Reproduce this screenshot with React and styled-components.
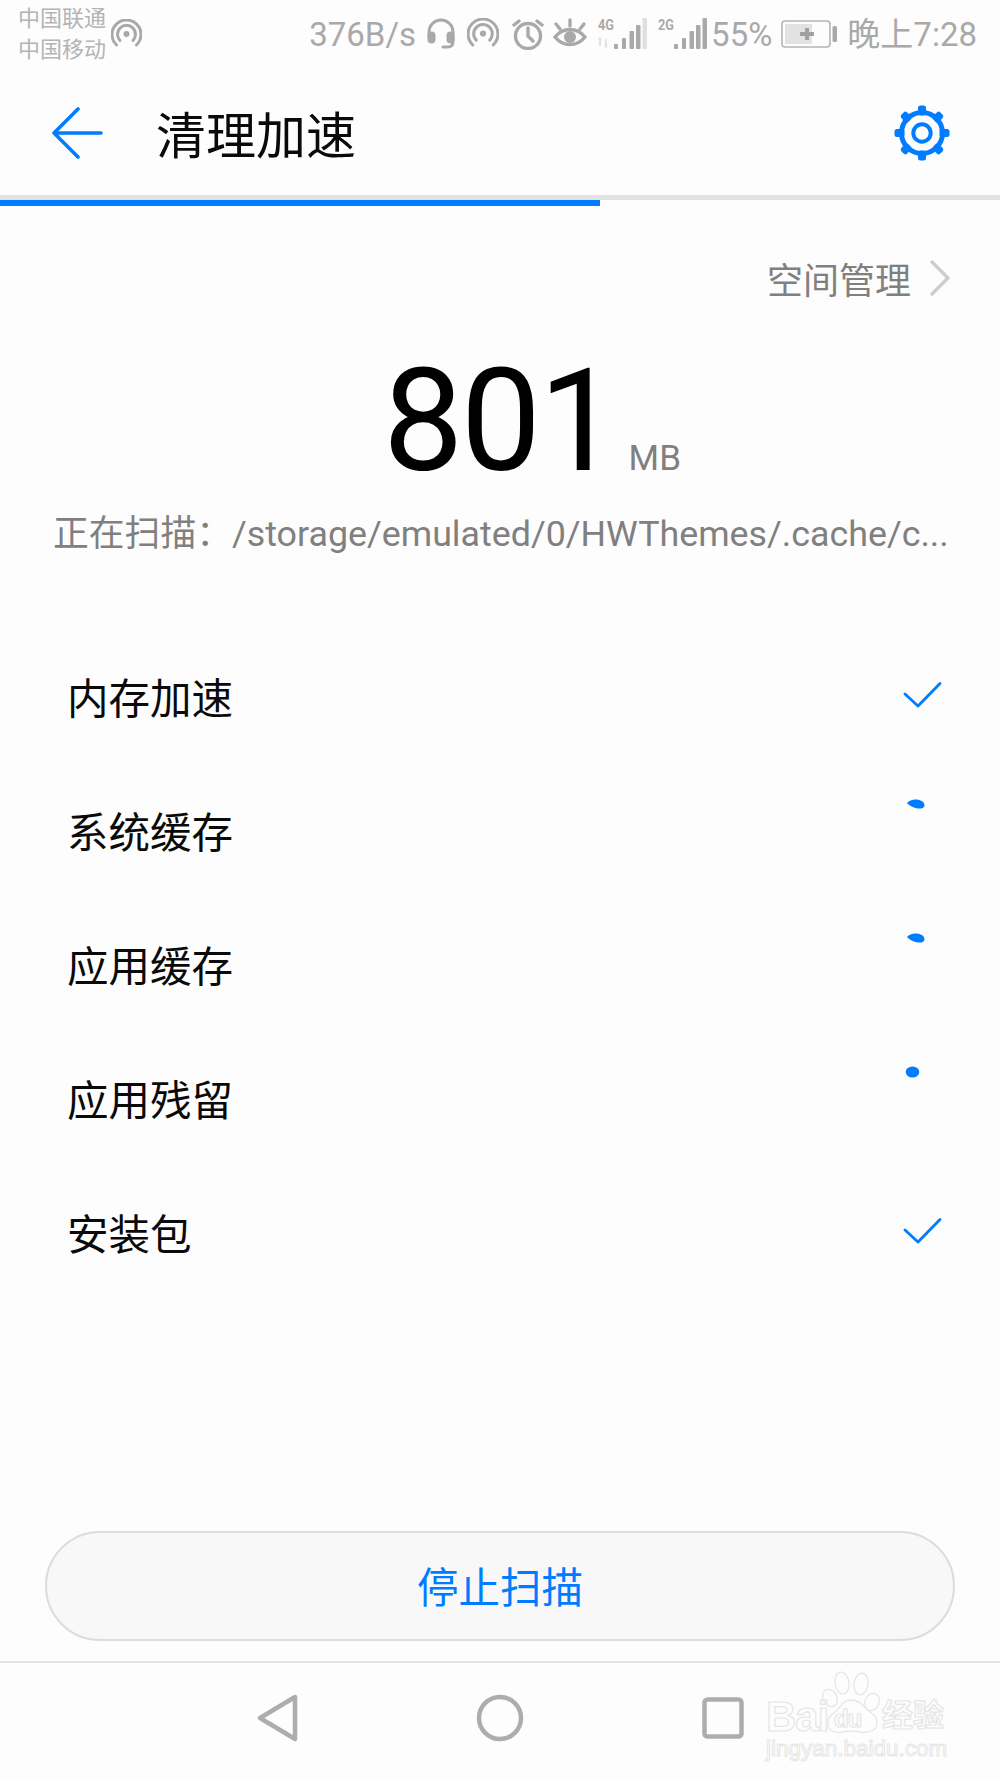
import React from "react";
import styled, { createGlobalStyle } from "styled-components";

const Global = createGlobalStyle`
  html, body { margin: 0; padding: 0; background: #fdfdfd; }
  * { box-sizing: border-box; }
`;
const SANS = `Roboto, "Noto Sans CJK SC", sans-serif`;
const BLUE = "#007dff";
const STATUS = "#a9a9a9";

const Page = styled.div`
  width: 1000px; height: 1778px; background: #fdfdfd; display: flex; flex-direction: column;
  font-family: ${SANS}; position: relative; overflow: hidden;
`;
const StatusBar = styled.div`
  height: 68px; display: flex; align-items: center; padding: 0 23px 0 18px; color: ${STATUS};
`;
const Carriers = styled.div`
  display: flex; flex-direction: column; font-size: 22px; line-height: 31px; width: 90px; white-space: nowrap; color: #b4b4b4;
`;
const StatusRight = styled.div`
  margin-left: auto; display: flex; align-items: center; height: 100%;
`;
const StatusText = styled.span`
  font-size: 33px; line-height: 1; white-space: nowrap; margin-left: ${p => p.$ml || 0}px;
`;
const Ico = styled.svg`
  display: block; flex: none; margin-left: ${p => p.$ml || 0}px;
`;
const Header = styled.header`
  height: 127px; display: flex; align-items: center; padding: 3px 50px 0 52px;
`;
const Title = styled.h1`
  margin: 8px 0 0 53px; font-size: 50px; font-weight: 400; color: #0a0a0a; line-height: 1;
`;
const GearWrap = styled.div` margin-left: auto; display: flex; `;
const Track = styled.div`
  height: 11px; position: relative; border-top: 5px solid #e2e2e2;
`;
const Fill = styled.div`
  height: 6px; background: ${BLUE};
`;
const Manage = styled.div`
  display: flex; justify-content: flex-end; align-items: center; padding: 0 49px 0 0; margin-top: 50px; height: 44px;
  color: #808080; font-size: 36px;
`;
const Chevron = styled.svg` display: block; margin-left: 18px; `;
const BigRow = styled.div`
  display: flex; align-items: baseline; padding-left: 383px; height: 160px; margin-top: 41px;
`;
const Big = styled.span`
  font-size: 143px; line-height: 160px; color: #000; letter-spacing: -2.500px;
`;
const Unit = styled.span`
  font-size: 35px; color: #808080; margin-left: 12px;
`;
const ScanLine = styled.div`
  padding-left: 53px; font-size: 35.8px; line-height: 44px; color: #808080; white-space: nowrap; margin-top: 11px;
`;
const List = styled.div` margin-top: 73px; display: flex; flex-direction: column; `;
const Row = styled.div`
  height: 134px; display: flex; align-items: center; justify-content: space-between; padding: 0 47px 0 67px;
  font-size: 41.5px; color: #0a0a0a;
`;
const Bottom = styled.div`
  margin-top: auto; display: flex; flex-direction: column;
`;
const ButtonBar = styled.div` padding: 0 45px; `;
const StopButton = styled.div`
  height: 110px; border-radius: 55px; background: #f8f8f8; border: 2px solid #dcdcdc;
  display: flex; align-items: center; justify-content: center; color: ${BLUE}; font-size: 41.5px; padding-bottom: 3px;
`;
const NavBar = styled.nav`
  margin-top: 20px; height: 117px; border-top: 2px solid #e4e4e4; display: flex; align-items: center; padding: 0 0 5px 255px; position: relative;
`;
const Mark = styled.div`
  position: absolute; left: 766px; top: 7px; width: 190px; height: 94px; color: transparent;
  -webkit-text-stroke: 1.2px #e6e6e6; font-family: "Liberation Sans", sans-serif;
`;
const MarkBai = styled.span`
  position: absolute; left: 0; top: 26px; font-size: 42px; line-height: 1; font-weight: 700; letter-spacing: -1px;
`;
const MarkDu = styled.span`
  position: absolute; left: 68px; top: 37px; font-size: 24px; line-height: 1; font-weight: 700; letter-spacing: -1px;
`;
const MarkCn = styled.span`
  position: absolute; left: 116px; top: 27px; font-size: 31px; line-height: 1; font-family: "Noto Sans CJK SC", sans-serif; font-weight: 700;
`;
const MarkUrl = styled.span`
  position: absolute; left: 0; top: 68px; font-size: 22.5px; line-height: 1; white-space: nowrap; -webkit-text-stroke-width: 1px;
`;

const Hotspot = ({ ml, size = 31 }) => (
  <Ico $ml={ml} width={size} height={size} viewBox="0 0 31 31" fill="none" stroke={STATUS} strokeWidth="3" strokeLinecap="round">
    <circle cx="15.500" cy="15" r="3" fill={STATUS} stroke="none" />
    <path d="M9 21.500a9 9 0 1 1 13 0" />
    <path d="M5.500 26a14.500 14.500 0 1 1 20 0" />
  </Ico>
);
const Headset = () => (
  <Ico $ml={10} width="30" height="32" viewBox="0 0 30 32" fill="none" stroke={STATUS} strokeWidth="3" strokeLinecap="round">
    <path d="M3 19v-5a12 12 0 0 1 24 0v10c0 3-2 5-5 5h-5" />
    <rect x="3" y="15" width="5" height="9" rx="2.500" fill={STATUS} />
    <rect x="22" y="15" width="5" height="9" rx="2.500" fill={STATUS} />
  </Ico>
);
const Alarm = () => (
  <Ico $ml={13} width="32" height="32" viewBox="0 0 32 32" fill="none" stroke={STATUS} strokeWidth="3.400" strokeLinecap="round">
    <circle cx="16" cy="18" r="12.500" />
    <path d="M16 10v8l5 5M2 7l5-4M30 7l-5-4" />
  </Ico>
);
const Eye = () => (
  <Ico $ml={9} width="34" height="32" viewBox="0 0 34 32" fill="none" stroke={STATUS} strokeWidth="3.400" strokeLinecap="round">
    <path d="M2 19c8-10 22-10 30 0c-8 10-22 10-30 0z" />
    <circle cx="17" cy="19" r="6" fill={STATUS} stroke="none" />
    <path d="M7 11L3 6M17 8V2M27 11l4-5" />
  </Ico>
);
const SignalLabel = styled.text`
  font-size: 15px; font-weight: 700; font-family: Roboto, sans-serif; fill: ${STATUS};
`;
const Signal = ({ label, ml, full }) => (
  <Ico $ml={ml} width="49" height="34" viewBox="0 0 49 34">
    <SignalLabel x="0" y="13" textLength="16" lengthAdjust="spacingAndGlyphs">{label}</SignalLabel>
    {!full && <path d="M2 29v-7M1 23.500l1-2 1 2M8 22v7M7 27.500l1 2 1-2" stroke="#e2e2e2" strokeWidth="2" fill="none" />}
    <rect x="16" y="27" width="4" height="5" rx="1" fill={STATUS} />
    <rect x="24" y="21" width="4" height="11" rx="1" fill={STATUS} />
    <rect x="31.500" y="14" width="4.500" height="18" rx="1" fill={STATUS} />
    <rect x="38" y="8" width="4.500" height="24" rx="1" fill={STATUS} />
    <rect x="44.500" y="1" width="4.500" height="31" rx="1" fill={full ? STATUS : "#e0e0e0"} />
  </Ico>
);
const Battery = () => (
  <Ico $ml={9} width="56" height="28" viewBox="0 0 56 28">
    <rect x="1" y="1" width="48" height="26" rx="3" fill="none" stroke="#b4b4b4" strokeWidth="1.600" />
    <rect x="4" y="4" width="27" height="20" fill="#e2e2e2" />
    <path d="M19 14h14M26 8v12" stroke="#a0a0a0" strokeWidth="4" />
    <rect x="51.500" y="6" width="4.500" height="16" rx="1.500" fill={STATUS} />
  </Ico>
);
const Gear = () => (
  <Ico width="56" height="56" viewBox="0 0 56 56">
    {[0, 45, 90, 135, 180, 225, 270, 315].map(a => (
      <rect key={a} x="24" y="0.500" width="8" height="10" rx="2.500" fill={BLUE} transform={`rotate(${a} 28 28)`} />
    ))}
    <circle cx="28" cy="28" r="20.500" fill="none" stroke={BLUE} strokeWidth="5" />
    <circle cx="28" cy="28" r="8.700" fill="none" stroke={BLUE} strokeWidth="4" />
  </Ico>
);
const Check = () => (
  <Ico width="60" height="80" viewBox="0 0 60 80" fill="none" stroke={BLUE} strokeWidth="2.800" strokeLinecap="round" strokeLinejoin="round">
    <path d="M12 38l13 12L47 27.500" />
  </Ico>
);
const Blob = ({ round }) => (
  <Ico width="60" height="80" viewBox="0 0 60 80" fill={BLUE}>
    {round
      ? <ellipse cx="19.500" cy="14" rx="6.800" ry="5.500" />
      : <path d="M14 13c2-2.500 6-4 10-3.500c4 .5 7.500 2.500 7.500 5.500c0 3-3 4-6.500 3.500c-4-.5-9-3-11-5.500z" />}
  </Ico>
);

const rows = [
  ["内存加速", "check"],
  ["系统缓存", "blob"],
  ["应用缓存", "blob"],
  ["应用残留", "round"],
  ["安装包", "check"],
];

export default function App() {
  return (
    <Page>
      <Global />
      <StatusBar>
        <Carriers><span>中国联通</span><span>中国移动</span></Carriers>
        <Hotspot ml={3} />
        <StatusRight>
          <StatusText>376B/s</StatusText>
          <Headset />
          <Hotspot ml={11} size={32} />
          <Alarm />
          <Eye />
          <Signal label="4G" ml={11} />
          <Signal label="2G" ml={11} full />
          <StatusText $ml={4}>55%</StatusText>
          <Battery />
          <StatusText $ml={10}>晚上7:28</StatusText>
        </StatusRight>
      </StatusBar>
      <Header>
        <Ico width="51" height="52" viewBox="0 0 51 52" fill="none" stroke={BLUE} strokeWidth="3.600" strokeLinecap="round" strokeLinejoin="round">
          <path d="M49 26H2M26 2L2 26l24 24" />
        </Ico>
        <Title>清理加速</Title>
        <GearWrap><Gear /></GearWrap>
      </Header>
      <Track><Fill style={{ width: "60%" }} /></Track>
      <Manage>
        空间管理
        <Chevron width="22" height="36" viewBox="0 0 22 36" fill="none" stroke="#cdcdcd" strokeWidth="3.400" strokeLinecap="round" strokeLinejoin="round">
          <path d="M3 2l16 16L3 34" />
        </Chevron>
      </Manage>
      <BigRow><Big>801</Big><Unit>MB</Unit></BigRow>
      <ScanLine>正在扫描：/storage/emulated/0/HWThemes/.cache/c...</ScanLine>
      <List>
        {rows.map(([t, k]) => (
          <Row key={t}>
            <span>{t}</span>
            {k === "check" ? <Check /> : <Blob round={k === "round"} />}
          </Row>
        ))}
      </List>
      <Bottom>
        <ButtonBar><StopButton>停止扫描</StopButton></ButtonBar>
        <NavBar>
          <Ico width="44" height="50" viewBox="0 0 44 50" fill="none" stroke="#adadad" strokeWidth="4.500" strokeLinejoin="round">
            <path d="M40 4L5 25l0 0L40 46z" />
          </Ico>
          <Ico $ml={177} width="48" height="48" viewBox="0 0 48 48" fill="none" stroke="#adadad" strokeWidth="4.500">
            <circle cx="24" cy="24" r="21" />
          </Ico>
          <Ico $ml={178} width="42" height="42" viewBox="0 0 42 42" fill="none" stroke="#adadad" strokeWidth="4.500">
            <rect x="2.500" y="2.500" width="37" height="37" rx="3" />
          </Ico>
          <Mark>
            <Ico width="190" height="66" viewBox="0 0 190 66" fill="#fdfdfd" stroke="#e6e6e6" strokeWidth="1.300" style={{ position: "absolute", left: 0, top: 0 }}>
              <ellipse cx="64" cy="28" rx="7" ry="9" transform="rotate(-25 64 28)" />
              <ellipse cx="76" cy="13" rx="7" ry="11" transform="rotate(-8 76 13)" />
              <ellipse cx="95" cy="14" rx="7" ry="11" transform="rotate(8 95 14)" />
              <ellipse cx="106" cy="32" rx="7" ry="9" transform="rotate(25 106 32)" />
              <path d="M85 30c-8 0-10 7-16 12c-6 4-8 8-7 13c1 6 7 8 14 7c6-1 13-1 19 0c7 1 15-1 16-8c1-6-3-9-8-13c-6-5-9-11-18-11z" />
            </Ico>
            <MarkBai>Bai</MarkBai>
            <MarkDu>du</MarkDu>
            <MarkCn>经验</MarkCn>
            <MarkUrl>jingyan.baidu.com</MarkUrl>
          </Mark>
        </NavBar>
      </Bottom>
    </Page>
  );
}
